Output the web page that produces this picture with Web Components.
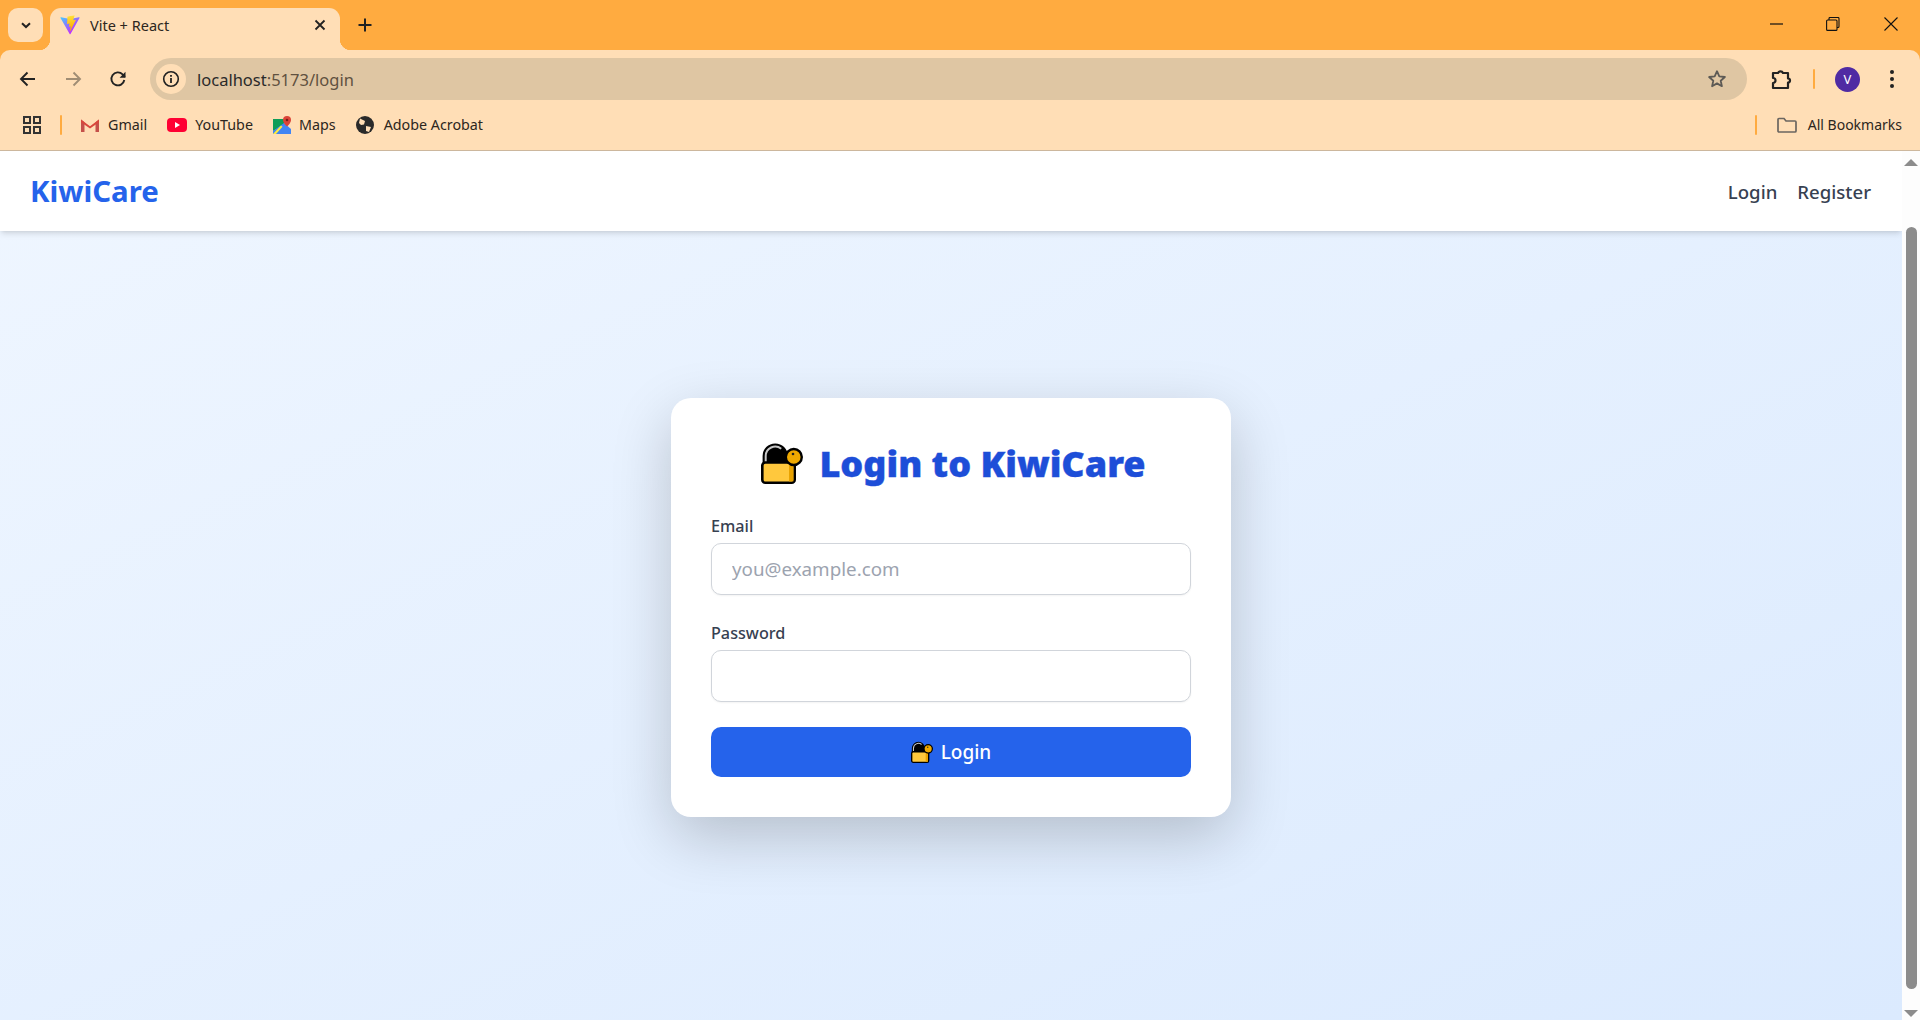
<!DOCTYPE html>
<html>
<head>
<meta charset="utf-8">
<title>Vite + React</title>
<style>
  html, body { margin: 0; height: 100%; overflow: hidden; }
  body { display: flex; flex-direction: column; height: 1020px; background: #FFAB40; font-family: "Noto Sans", "Open Sans", sans-serif; }
  .page { flex: 1; display: flex; min-height: 0; }
</style>
</head>
<body>
  <tab-strip></tab-strip>
  <address-bar url-host="localhost" url-rest=":5173/login"></address-bar>
  <bookmark-bar></bookmark-bar>
  <div class="page">
    <site-page>
      <site-nav slot="nav" brand="KiwiCare"></site-nav>
      <login-card></login-card>
    </site-page>
    <page-scrollbar></page-scrollbar>
  </div>

<script>
// the lock + key emoji, used in the heading and on the button
class LockKey extends HTMLElement {
  connectedCallback() {
    const size = this.getAttribute("size") || 42;
    this.attachShadow({ mode: "open" }).innerHTML = `
      <style>
        :host { display: inline-flex; flex: none; }
        svg { display: block; }
      </style>
      <svg width="${size}" height="${size}" viewBox="0 0 42 42">
        <path d="M2.800 24V14a11.400 11.400 0 0 1 22.800 0V24z" fill="#000" stroke="#000" stroke-width="2.400"/>
        <path d="M4.700 20V14a9.500 9.500 0 0 1 15.500-7.300" fill="none" stroke="#c8c8c8" stroke-width="2"/>
        <rect x="1.300" y="20.500" width="32.400" height="20.200" rx="3" fill="#FFC83D" stroke="#000" stroke-width="2.600"/>
        <path d="M28 20h4.400v19.400H28z" fill="#E8A200"/>
        <circle cx="32.800" cy="15" r="8" fill="#EFA900" stroke="#000" stroke-width="2.400"/>
        <circle cx="32" cy="12" r="1.300" fill="#222"/>
      </svg>`;
  }
}
customElements.define("lock-key", LockKey);

class TabStrip extends HTMLElement {
  constructor() {
    super();
    this.attachShadow({ mode: "open" }).innerHTML = `
      <style>
        :host { display: flex; height: 50px; background: #FFAB40; position: relative; font-family: "Noto Sans", sans-serif; }
        .search { width: 35px; height: 34px; margin: 8px 0 0 8px; background: #FFDEB6; border-radius: 10px; display: flex; align-items: center; justify-content: center; }
        .tab { width: 290px; height: 42px; margin: 8px 0 0 7px; background: #FFDEB6; border-radius: 11px 11px 0 0; display: flex; align-items: center; position: relative; box-sizing: border-box; padding: 0 0 9px 10px; }
        .tab::before, .tab::after { content: ""; position: absolute; bottom: 0; width: 11px; height: 11px; }
        .tab::before { left: -11px; background: radial-gradient(circle at 0 0, transparent 11px, #FFDEB6 11.500px); }
        .tab::after { right: -11px; background: radial-gradient(circle at 100% 0, transparent 11px, #FFDEB6 11.500px); }
        .title { margin-left: 10px; font-size: 14.500px; color: #2c2620; flex: 1; }
        .close { margin-right: 13px; display: flex; }
        .plus { margin: 16px 0 0 16px; display: flex; height: 18px; }
        .win { margin-left: auto; display: flex; align-items: center; height: 48px; }
        .win div { width: 58px; display: flex; justify-content: center; }
        .win div:first-child { padding-left: 4px; width: 54px; }
      </style>
      <div class="search">
        <svg width="14" height="14" viewBox="0 0 14 14"><path d="M3 5.200 7 9l4-3.800" fill="none" stroke="#222" stroke-width="2"/></svg>
      </div>
      <div class="tab">
        <svg width="20" height="20" viewBox="0 0 410 404">
          <defs>
            <linearGradient id="v" x1="6" y1="33" x2="235" y2="344" gradientUnits="userSpaceOnUse"><stop offset="0" stop-color="#41D1FF"/><stop offset="1" stop-color="#BD34FE"/></linearGradient>
            <linearGradient id="b" x1="194" y1="8" x2="236" y2="293" gradientUnits="userSpaceOnUse"><stop offset="0" stop-color="#FFEA83"/><stop offset=".08" stop-color="#FFDD35"/><stop offset="1" stop-color="#FFA800"/></linearGradient>
          </defs>
          <path d="M399.641 59.5246L215.643 388.545C211.844 395.338 202.084 395.378 198.228 388.618L10.5817 59.5563C6.38087 52.1896 12.6802 43.2665 21.0281 44.7586L205.223 77.6824C206.398 77.8924 207.601 77.8904 208.776 77.6763L389.119 44.8058C397.439 43.2894 403.768 52.1434 399.641 59.5246Z" fill="url(#v)"/>
          <path d="M292.965 1.5744L156.801 28.2552C154.563 28.6937 152.906 30.5903 152.771 32.8664L144.395 174.33C144.198 177.662 147.258 180.248 150.51 179.498L188.42 170.749C191.967 169.931 195.172 173.055 194.443 176.622L183.18 231.775C182.422 235.487 185.907 238.661 189.532 237.56L212.947 230.446C216.577 229.344 220.065 232.527 219.297 236.242L201.398 322.875C200.278 328.294 207.486 331.249 210.492 326.603L212.5 323.5L323.454 102.072C325.312 98.3645 322.108 94.137 318.036 94.9228L279.014 102.454C275.347 103.161 272.227 99.746 273.262 96.1583L298.731 7.86689C299.767 4.27314 296.636 0.855181 292.965 1.5744Z" fill="url(#b)"/>
        </svg>
        <span class="title">Vite + React</span>
        <span class="close"><svg width="14" height="14" viewBox="0 0 14 14"><path d="M2.500 2.500l9 9M11.500 2.500l-9 9" stroke="#222" stroke-width="1.800"/></svg></span>
      </div>
      <span class="plus"><svg width="18" height="18" viewBox="0 0 18 18"><path d="M9 2.500v13M2.500 9h13" stroke="#222" stroke-width="2"/></svg></span>
      <div class="win">
        <div><svg width="14" height="14" viewBox="0 0 14 14"><path d="M0 7h13" stroke="#111" stroke-width="1.200"/></svg></div>
        <div><svg width="14" height="14" viewBox="0 0 14 14" fill="none" stroke="#111" stroke-width="1.100"><rect x=".6" y="3" width="10.400" height="10.400" rx="1"/><path d="M3 3V1.500q0-1 1-1h8q1 0 1 1v8q0 1-1 1h-1"/></svg></div>
        <div><svg width="14" height="14" viewBox="0 0 14 14"><path d="M.5.5l13 13M13.500.5l-13 13" stroke="#111" stroke-width="1.100"/></svg></div>
      </div>`;
  }
}
customElements.define("tab-strip", TabStrip);

class AddressBar extends HTMLElement {
  connectedCallback() {
    const host = this.getAttribute("url-host");
    const rest = this.getAttribute("url-rest");
    this.attachShadow({ mode: "open" }).innerHTML = `
      <style>
        :host { display: flex; align-items: center; height: 56px; box-sizing: border-box; padding: 2px 0 0 5px; background: #FFDEB6; border-radius: 10px 10px 0 0; font-family: "Noto Sans", sans-serif; }
        .nav { display: flex; width: 45px; justify-content: center; }
        .url { width: 1597px; height: 42px; margin-left: 10px; border-radius: 21px; background: #DFC6A3; display: flex; align-items: center; box-sizing: border-box; padding: 0 20px 0 6px; }
        .info { width: 30px; height: 30px; border-radius: 50%; background: #FFDEB6; display: flex; align-items: center; justify-content: center; }
        .text { margin-left: 11px; font-size: 16.500px; color: #5f5140; flex: 1; }
        .text b { font-weight: 400; color: #2a2a2a; }
        .ext { margin-left: 23px; display: flex; }
        .sep { width: 2px; height: 20px; background: #FFAB40; border-radius: 1px; margin-left: 21px; }
        .avatar { width: 25px; height: 25px; border-radius: 50%; background: #4F2BA3; color: #fff; font-size: 13px; display: flex; align-items: center; justify-content: center; margin-left: 20px; }
        .dots { margin-left: 29px; display: flex; }
      </style>
      <div class="nav"><svg width="20" height="20" viewBox="0 0 20 20"><path d="M17 10H3.500M9.500 3.500 3 10l6.500 6.500" fill="none" stroke="#222" stroke-width="1.900"/></svg></div>
      <div class="nav"><svg width="20" height="20" viewBox="0 0 20 20"><path d="M3 10h13.500M10.500 3.500 17 10l-6.500 6.500" fill="none" stroke="#a08d74" stroke-width="1.900"/></svg></div>
      <div class="nav"><svg width="20" height="20" viewBox="0 0 20 20"><path d="M16.300 11a6.500 6.500 0 1 1-1.700-5.600L17 7.800" fill="none" stroke="#222" stroke-width="1.900"/><path d="M17.500 2.800v5.900h-5.900z" fill="#222"/></svg></div>
      <div class="url">
        <div class="info"><svg width="18" height="18" viewBox="0 0 18 18"><circle cx="9" cy="9" r="7.300" fill="none" stroke="#222" stroke-width="1.600"/><path d="M9 8v5M9 5v1.800" stroke="#222" stroke-width="1.800"/></svg></div>
        <span class="text"><b>${host}</b>${rest}</span>
        <svg width="20" height="20" viewBox="0 0 20 20"><path d="M10 2.200l2.300 5.200 5.600.6-4.200 3.700 1.200 5.500L10 14.400l-4.900 2.800 1.200-5.500L2.100 8l5.600-.6z" fill="none" stroke="#5d5a55" stroke-width="1.800" stroke-linejoin="round"/></svg>
      </div>
      <span class="ext"><svg width="22" height="22" viewBox="0 0 22 22"><path d="M3 5h5a2.700 2.700 0 0 1 5 0h5v5.500a2 2 0 0 1 0 4V20H3v-5a2.500 2.500 0 0 0 0-5z" fill="none" stroke="#222" stroke-width="2.200" stroke-linejoin="round"/></svg></span>
      <span class="sep"></span>
      <span class="avatar">V</span>
      <span class="dots"><svg width="6" height="20" viewBox="0 0 6 20" fill="#222"><circle cx="3" cy="3" r="2"/><circle cx="3" cy="10" r="2"/><circle cx="3" cy="17" r="2"/></svg></span>`;
  }
}
customElements.define("address-bar", AddressBar);

class BookmarkItem extends HTMLElement {
  constructor() {
    super();
    this.attachShadow({ mode: "open" }).innerHTML = `
      <style>
        :host { display: flex; align-items: center; gap: 8px; font-size: 14.300px; color: #2c2620; white-space: nowrap; }
      </style>
      <slot name="icon"></slot><slot></slot>`;
  }
}
customElements.define("bookmark-item", BookmarkItem);

class BookmarkBar extends HTMLElement {
  constructor() {
    super();
    this.attachShadow({ mode: "open" }).innerHTML = `
      <style>
        :host { display: flex; align-items: center; height: 45px; box-sizing: border-box; padding: 0 18px 7px 22px; background: #FFDEB6; border-bottom: 1px solid #CDB89E; font-family: "Noto Sans", sans-serif; }
        .sep { width: 2px; height: 20px; background: #FFAB40; border-radius: 1px; }
        .items { display: flex; gap: 20px; margin-left: 18px; }
        .right { margin-left: auto; display: flex; align-items: center; gap: 20px; }
        .right bookmark-item { font-size: 14px; }
      </style>
      <svg width="20" height="20" viewBox="0 0 20 20" fill="none" stroke="#333" stroke-width="2" style="margin-right:18px"><rect x="2" y="2" width="6" height="6"/><rect x="12" y="2" width="6" height="6"/><rect x="2" y="12" width="6" height="6"/><rect x="12" y="12" width="6" height="6"/></svg>
      <span class="sep"></span>
      <div class="items">
        <bookmark-item>
          <svg slot="icon" width="20" height="16" viewBox="0 0 20 16"><path d="M1 15V2.500l3.500 2.700V15z" fill="#C5504A"/><path d="M19 15V2.500l-3.500 2.700V15z" fill="#C5504A"/><path d="M1 2.500 10 9.200l9-6.700v2.700L10 11.500 1 5.200z" fill="#D9473C"/></svg>
          Gmail</bookmark-item>
        <bookmark-item>
          <svg slot="icon" width="20" height="14" viewBox="0 0 20 14"><rect width="20" height="14" rx="4" fill="#FF0033"/><path d="M8 4v6l5-3z" fill="#fff"/></svg>
          YouTube</bookmark-item>
        <bookmark-item>
          <svg slot="icon" width="18" height="18" viewBox="0 0 18 18"><path d="M0 3h11v6L0 15z" fill="#0F9D58"/><path d="M0 18V15L11 7l7 6v5z" fill="#4285F4"/><path d="M0 18 8 9.500l1.500 1.300L3 18z" fill="#FFEB3B"/><path d="M14 0a4 4 0 0 1 4 4c0 3-4 6.500-4 6.500S10 7 10 4a4 4 0 0 1 4-4z" fill="#DB4437"/><circle cx="14" cy="4" r="1.300" fill="#7a1e16"/></svg>
          Maps</bookmark-item>
        <bookmark-item>
          <svg slot="icon" width="18" height="18" viewBox="0 0 18 18" style="margin-right:2px"><circle cx="9" cy="9" r="9" fill="#2a2a2a"/><path d="M4 2.500 9 5 8 8.500 5 9 3 7zM10 10l5 1-2 5-3-1z" fill="#FFDEB6"/></svg>
          Adobe Acrobat</bookmark-item>
      </div>
      <div class="right">
        <span class="sep"></span>
        <bookmark-item>
          <svg slot="icon" width="20" height="16" viewBox="0 0 20 16" style="margin-right:3px"><path d="M1 14V2.500q0-1 1-1h5l2 2.500h9q1 0 1 1V14q0 1-1 1H2q-1 0-1-1z" fill="none" stroke="#6b6660" stroke-width="1.700"/></svg>
          All Bookmarks</bookmark-item>
      </div>`;
  }
}
customElements.define("bookmark-bar", BookmarkBar);

class SitePage extends HTMLElement {
  constructor() {
    super();
    this.attachShadow({ mode: "open" }).innerHTML = `
      <style>
        :host { flex: 1; display: flex; flex-direction: column; background: linear-gradient(to bottom right, #EFF6FF, #DBEAFE); min-width: 0; }
        main { display: flex; justify-content: center; padding-top: 167px; }
      </style>
      <slot name="nav"></slot>
      <main><slot></slot></main>`;
  }
}
customElements.define("site-page", SitePage);

class SiteNav extends HTMLElement {
  connectedCallback() {
    const brand = this.getAttribute("brand");
    this.attachShadow({ mode: "open" }).innerHTML = `
      <style>
        :host { display: flex; align-items: center; justify-content: space-between; height: 80px; box-sizing: border-box; padding: 0 31px 0 30px; background: #fff; box-shadow: 0 4px 6px -1px rgba(0,0,0,.1), 0 2px 4px -2px rgba(0,0,0,.1); font-family: "Noto Sans", sans-serif; }
        .brand { font-size: 29.400px; font-weight: 700; color: #2563EB; }
        nav { display: flex; gap: 20px; }
        a { font-size: 18.600px; font-weight: 500; color: #374151; text-decoration: none; }
      </style>
      <span class="brand">${brand}</span>
      <nav><a href="#">Login</a><a href="#">Register</a></nav>`;
  }
}
customElements.define("site-nav", SiteNav);

class FormField extends HTMLElement {
  connectedCallback() {
    const label = this.getAttribute("label");
    const type = this.getAttribute("type") || "text";
    const hint = this.getAttribute("placeholder") || "";
    this.attachShadow({ mode: "open" }).innerHTML = `
      <style>
        :host { display: block; }
        label { display: block; font-size: 16.200px; font-weight: 500; line-height: 27px; color: #374151; margin-bottom: 3px; }
        input { display: block; width: 100%; height: 52px; box-sizing: border-box; padding: 0 20px; border: 1px solid #D1D5DB; border-radius: 10px; background: #fff; font: 400 18.800px "Noto Sans", sans-serif; box-shadow: 0 1px 2px rgba(0,0,0,.05); outline: none; }
        input::placeholder { color: #9CA3AF; opacity: 1; }
      </style>
      <label>${label}</label>
      <input type="${type}" placeholder="${hint}">`;
  }
}
customElements.define("form-field", FormField);

class LoginCard extends HTMLElement {
  constructor() {
    super();
    this.attachShadow({ mode: "open" }).innerHTML = `
      <style>
        :host { display: block; width: 560px; box-sizing: border-box; padding: 40px; background: #fff; border-radius: 20px; box-shadow: 0 20px 60px rgba(0,0,0,.2); font-family: "Noto Sans", sans-serif; }
        h2 { margin: 0 0 25px; padding-left: 5px; display: flex; align-items: center; justify-content: center; gap: 16px; height: 50px; font-size: 36px; font-weight: 900; color: #1D4ED8; white-space: nowrap; -webkit-text-stroke: .4px #1D4ED8; }
        form { display: flex; flex-direction: column; }
        form-field + form-field { margin-top: 25px; }
        button { margin-top: 25px; height: 50px; padding-top: 1px; border: 0; border-radius: 10px; background: #2563EB; color: #fff; font: 500 19px "Noto Sans", sans-serif; display: flex; align-items: center; justify-content: center; gap: 8px; }
      </style>
      <h2><lock-key size="42"></lock-key>Login to KiwiCare</h2>
      <form>
        <form-field label="Email" type="email" placeholder="you@example.com"></form-field>
        <form-field label="Password" type="password"></form-field>
        <button type="button"><lock-key size="22"></lock-key>Login</button>
      </form>`;
  }
}
customElements.define("login-card", LoginCard);

class PageScrollbar extends HTMLElement {
  constructor() {
    super();
    this.attachShadow({ mode: "open" }).innerHTML = `
      <style>
        :host { width: 18px; flex: none; background: #FDFDFD; display: flex; flex-direction: column; align-items: center; }
        .arrow { width: 0; height: 0; border-left: 7px solid transparent; border-right: 7px solid transparent; }
        .up { border-bottom: 7px solid #8C8C8C; margin-top: 8px; }
        .down { border-top: 7px solid #8C8C8C; margin-bottom: 3px; }
        .thumb { flex: 1; width: 11px; margin: 61px 0 21px; background: #8C8C8C; border-radius: 6px; }
      </style>
      <span class="arrow up"></span>
      <div class="thumb"></div>
      <span class="arrow down"></span>`;
  }
}
customElements.define("page-scrollbar", PageScrollbar);
</script>
</body>
</html>
